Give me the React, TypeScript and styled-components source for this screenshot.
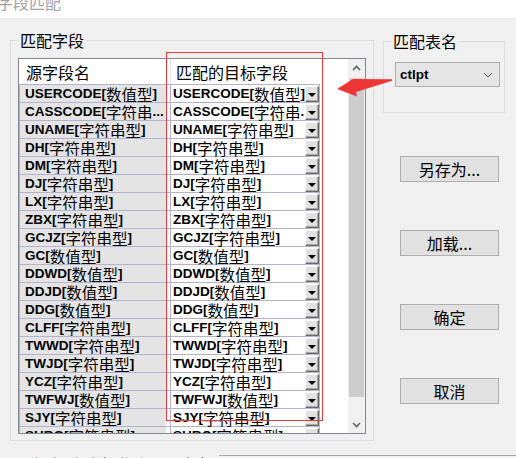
import React from 'react';
import styled, { createGlobalStyle } from 'styled-components';

const GlobalStyle = createGlobalStyle`
  html, body { margin: 0; padding: 0; }
  body {
    background: #f0f0f0;
    font-family: "Liberation Sans", "Noto Sans CJK SC", sans-serif;
    color: #000;
  }
`;

interface Pair {
  src: string;
  dst: string;
}

const rows: Pair[] = [
  { src: 'USERCODE[数值型]', dst: 'USERCODE[数值型]' },
  { src: 'CASSCODE[字符串...', dst: 'CASSCODE[字符串...' },
  { src: 'UNAME[字符串型]', dst: 'UNAME[字符串型]' },
  { src: 'DH[字符串型]', dst: 'DH[字符串型]' },
  { src: 'DM[字符串型]', dst: 'DM[字符串型]' },
  { src: 'DJ[字符串型]', dst: 'DJ[字符串型]' },
  { src: 'LX[字符串型]', dst: 'LX[字符串型]' },
  { src: 'ZBX[字符串型]', dst: 'ZBX[字符串型]' },
  { src: 'GCJZ[字符串型]', dst: 'GCJZ[字符串型]' },
  { src: 'GC[数值型]', dst: 'GC[数值型]' },
  { src: 'DDWD[数值型]', dst: 'DDWD[数值型]' },
  { src: 'DDJD[数值型]', dst: 'DDJD[数值型]' },
  { src: 'DDG[数值型]', dst: 'DDG[数值型]' },
  { src: 'CLFF[字符串型]', dst: 'CLFF[字符串型]' },
  { src: 'TWWD[字符串型]', dst: 'TWWD[字符串型]' },
  { src: 'TWJD[字符串型]', dst: 'TWJD[字符串型]' },
  { src: 'YCZ[字符串型]', dst: 'YCZ[字符串型]' },
  { src: 'TWFWJ[数值型]', dst: 'TWFWJ[数值型]' },
  { src: 'SJY[字符串型]', dst: 'SJY[字符串型]' },
  { src: 'SHRQ[字符串型]', dst: 'SHRQ[字符串型]' },
];

const HAN = /([\u3000-\u9fff\uff00-\uffef]+)/;

// latin parts bold, chinese parts regular — like the old GDI grid
const Mixed = ({ text }: { text: string }) => (
  <>
    {text.split(HAN).map((part, i) =>
      HAN.test(part) ? <Han key={i}>{part}</Han> : <Latin key={i}>{part}</Latin>
    )}
  </>
);

const Chevron = ({ up }: { up?: boolean }) => (
  <svg width="9" height="6" viewBox="0 0 9 6">
    <path
      d={up ? 'M1 5 L4.5 1.5 L8 5' : 'M1 1 L4.5 4.5 L8 1'}
      fill="none"
      stroke="#606060"
      strokeWidth="1.6"
    />
  </svg>
);

export default function App() {
  return (
    <Page>
      <GlobalStyle />
      <TitleBar>
        <Title>字段匹配</Title>
      </TitleBar>
      <Main>
        <LeftGroup>
          <GroupLabel>匹配字段</GroupLabel>
          <List>
            <Table>
              <Header>
                <HeaderCell $first>源字段名</HeaderCell>
                <HeaderCell>匹配的目标字段</HeaderCell>
              </Header>
              {rows.map((r, i) => (
                <Row key={i}>
                  <SourceCell>
                    <Mixed text={r.src} />
                  </SourceCell>
                  <TargetCell>
                    <TargetText>
                      <Mixed text={r.dst} />
                    </TargetText>
                    <DropButton>
                      <Caret />
                    </DropButton>
                  </TargetCell>
                </Row>
              ))}
            </Table>
            <ScrollBar>
              <ArrowButton>
                <Chevron up />
              </ArrowButton>
              <Thumb />
              <Track />
              <ArrowButton>
                <Chevron />
              </ArrowButton>
            </ScrollBar>
          </List>
        </LeftGroup>
        <Side>
          <RightGroup>
            <GroupLabel>匹配表名</GroupLabel>
            <Combo>
              <span>ctlpt</span>
              <svg width="10" height="6" viewBox="0 0 10 6">
                <path d="M1 1 L5 5 L9 1" fill="none" stroke="#555" strokeWidth="1" />
              </svg>
            </Combo>
          </RightGroup>
          <Button $top={43}>另存为...</Button>
          <Button>加载...</Button>
          <Button>确定</Button>
          <Button>取消</Button>
        </Side>
      </Main>
      <Footer>
        <FooterText>匹配保存(上次操作)设置: 确定</FooterText>
        <FooterLine />
      </Footer>
      <Highlight />
      <Arrow width="70" height="32" viewBox="330 70 70 32">
        <polygon points="337,89 353,79 392,79.3 392,80.7 356,92 357,96.5" fill="#ee3535" />
      </Arrow>
    </Page>
  );
}

const Page = styled.div`
  position: relative;
  width: 516px;
  height: 458px;
  overflow: hidden;
`;

const TitleBar = styled.div`
  height: 18px;
  background: #fff;
  overflow: hidden;
`;

const Title = styled.div`
  font-family: "Noto Sans CJK SC", sans-serif;
  font-size: 16px;
  line-height: 18px;
  color: #a3a3a3;
  margin: -7px 0 0 -3px;
`;

const Main = styled.div`
  display: flex;
  padding-left: 10px;
  height: 434px;
`;

const GroupLabel = styled.div`
  position: absolute;
  top: -10px;
  left: 7px;
  padding: 0 2px;
  background: #f0f0f0;
  font-family: "Noto Sans CJK SC", sans-serif;
  font-size: 16px;
  line-height: 18px;
`;

const LeftGroup = styled.div`
  position: relative;
  box-sizing: border-box;
  margin-top: 22px;
  width: 364px;
  height: 401px;
  border: 1px solid #dcdcdc;
  padding: 17px 0 0 7px;
`;

const List = styled.div`
  box-sizing: border-box;
  width: 348px;
  height: 376px;
  border: 1px solid #828790;
  background: #fff;
  display: flex;
`;

const Table = styled.div`
  flex: 1;
  overflow: hidden;
`;

const Header = styled.div`
  display: flex;
  height: 25px;
  align-items: center;
  font-family: "Noto Sans CJK SC", sans-serif;
  font-size: 16px;
`;

const HeaderCell = styled.div<{ $first?: boolean }>`
  box-sizing: border-box;
  height: 100%;
  display: flex;
  align-items: center;
  width: ${(p) => (p.$first ? '152px' : 'auto')};
  padding-left: ${(p) => (p.$first ? '7px' : '5px')};
  border-right: ${(p) => (p.$first ? '1px solid #e5e5e5' : 'none')};
`;

const Row = styled.div`
  display: flex;
  box-sizing: border-box;
  width: 301px;
  height: 18px;
  border-top: 1px solid #b4b0d0;
  background: #fff;
  white-space: nowrap;
`;

const Latin = styled.span`
  font-family: "Liberation Sans", sans-serif;
  font-size: 13.5px;
  font-weight: bold;
  line-height: 17px;
`;

const Han = styled.span`
  font-family: "Noto Sans CJK SC", sans-serif;
  font-weight: 400;
  font-size: 15.5px;
  line-height: 17px;
  margin-top: 1px;
`;

const SourceCell = styled.div`
  box-sizing: border-box;
  width: 147px;
  margin-right: 4px;
  padding-left: 5px;
  display: flex;
  align-items: center;
  border-left: 1px solid #b4b0d0;
  background: #e4e4e4;
  overflow: hidden;
`;

const TargetCell = styled.div`
  box-sizing: border-box;
  width: 150px;
  display: flex;
  align-items: center;
  border-left: 1px solid #b4b0d0;
  border-right: 1px solid #b4b0d0;
`;

const TargetText = styled.div`
  flex: 1;
  display: flex;
  align-items: center;
  padding-left: 2px;
  overflow: hidden;
`;

const DropButton = styled.div`
  box-sizing: border-box;
  flex: none;
  width: 14px;
  height: 16px;
  display: flex;
  align-items: center;
  justify-content: center;
  background: #e1e1e1;
  border-top: 1px solid #fafafa;
  border-left: 1px solid #fafafa;
  border-right: 1px solid #6a6a6a;
  border-bottom: 1px solid #6a6a6a;
  box-shadow: inset -1px -1px 0 #a6a6a6;
`;

const Caret = styled.div`
  width: 0;
  height: 0;
  margin-top: 2px;
  border-left: 4px solid transparent;
  border-right: 4px solid transparent;
  border-top: 4px solid #000;
`;

const ScrollBar = styled.div`
  width: 17px;
  display: flex;
  flex-direction: column;
  background: #f0f0f0;
`;

const ArrowButton = styled.div`
  height: 17px;
  display: flex;
  align-items: center;
  justify-content: center;
`;

const Thumb = styled.div`
  height: 319px;
  margin: 2px 1px 0;
  background: #cdcdcd;
`;

const Track = styled.div`
  flex: 1;
`;

const Side = styled.div`
  display: flex;
  flex-direction: column;
  margin-left: 9px;
`;

const RightGroup = styled.div`
  position: relative;
  box-sizing: border-box;
  margin-top: 23px;
  width: 122px;
  height: 72px;
  border: 1px solid #dcdcdc;
  padding: 20px 0 0 11px;
`;

const Combo = styled.div`
  box-sizing: border-box;
  width: 105px;
  height: 25px;
  display: flex;
  align-items: center;
  justify-content: space-between;
  padding: 0 6px 0 4px;
  background: #e5e5e5;
  border: 1px solid #adadad;
  font-size: 13.5px;
  font-weight: bold;
`;

const Button = styled.div<{ $top?: number }>`
  box-sizing: border-box;
  width: 99px;
  height: 26px;
  margin: ${(p) => p.$top ?? 48}px 0 0 17px;
  display: flex;
  align-items: center;
  justify-content: center;
  background: #e1e1e1;
  border: 1px solid #adadad;
  font-family: "Noto Sans CJK SC", sans-serif;
  font-size: 16px;
`;

const Footer = styled.div`
  display: flex;
  align-items: flex-start;
  height: 6px;
  overflow: hidden;
`;

const FooterText = styled.div`
  font-family: "Noto Sans CJK SC", sans-serif;
  font-size: 16px;
  line-height: 16px;
  margin-top: 4px;
  color: #555;
  white-space: nowrap;
`;

const FooterLine = styled.div`
  flex: 1;
  margin: 3px 0 0 8px;
  border-top: 1px solid #a9a9a9;
`;

const Highlight = styled.div`
  position: absolute;
  left: 166px;
  top: 52px;
  width: 157px;
  height: 369px;
  box-sizing: border-box;
  border: 1px solid #e8393c;
  pointer-events: none;
`;

const Arrow = styled.svg`
  position: absolute;
  left: 330px;
  top: 70px;
`;
